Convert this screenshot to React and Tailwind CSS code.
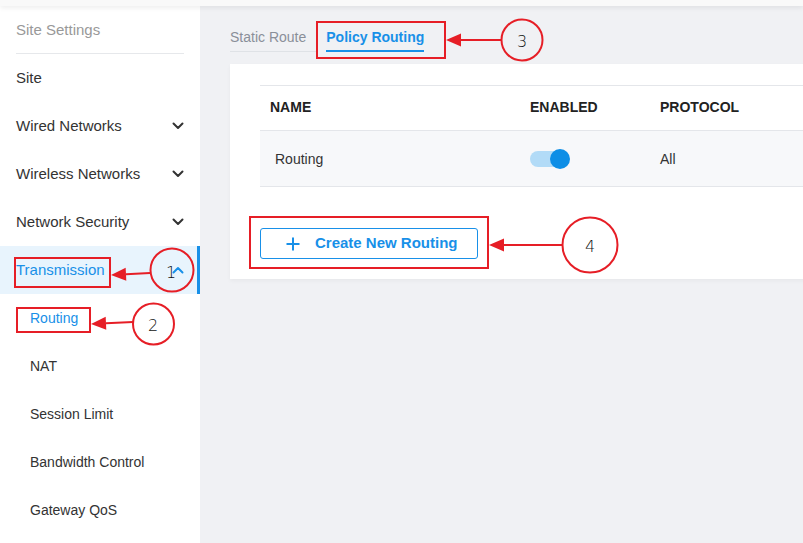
import React from "react";

const Chevron = ({ up = false, color = "#333" }) => (
  <svg width="12" height="8" viewBox="0 0 12 8" className="shrink-0">
    <path
      d={up ? "M1.5 6.5 L6 2 L10.5 6.5" : "M1.5 1.5 L6 6 L10.5 1.5"}
      fill="none"
      stroke={color}
      strokeWidth="2"
      strokeLinecap="round"
      strokeLinejoin="round"
    />
  </svg>
);

const Arrow = ({ x1, y1, x2, y2 }) => {
  const dx = x2 - x1;
  const dy = y2 - y1;
  const len = Math.hypot(dx, dy);
  const ux = dx / len;
  const uy = dy / len;
  const L = 15;
  const W = 6.5;
  const bx = x2 - ux * L;
  const by = y2 - uy * L;
  const px = -uy;
  const py = ux;
  return (
    <g>
      <line x1={x1} y1={y1} x2={bx} y2={by} stroke="#e61e26" strokeWidth="2" />
      <polygon
        points={`${x2},${y2} ${bx + px * W},${by + py * W} ${bx - px * W},${by - py * W}`}
        fill="#e61e26"
      />
    </g>
  );
};

const Annotations = () => (
  <svg
    className="absolute left-0 top-0 pointer-events-none"
    width="803"
    height="543"
    viewBox="0 0 803 543"
    style={{ fontFamily: "'DejaVu Sans', 'Liberation Sans', sans-serif" }}
  >
    <g fill="none" stroke="#e61e26" strokeWidth="2">
      <rect x="15" y="258" width="95" height="29" />
      <rect x="17" y="308" width="73" height="24" />
      <rect x="317" y="22" width="128" height="36" />
      <rect x="250" y="217" width="238" height="51" />
      <circle cx="172" cy="270" r="21.5" />
      <circle cx="153.5" cy="324" r="20.5" />
      <circle cx="522" cy="40" r="20.5" />
      <circle cx="590" cy="245" r="27.5" />
    </g>
    <Arrow x1={150} y1={273} x2={111} y2={275} />
    <Arrow x1={133} y1={322} x2={91} y2={324} />
    <Arrow x1={501} y1={40} x2={446} y2={40} />
    <Arrow x1={562} y1={245} x2={489} y2={245} />
    <g fill="#111" fontSize="16" fontWeight="300" textAnchor="middle">
      <text x="171" y="278">1</text>
      <text x="153" y="331">2</text>
      <text x="522" y="47">3</text>
      <text x="590" y="252">4</text>
    </g>
  </svg>
);

const NavItem = ({ label, chevron }) => (
  <div className="h-[48px] flex items-center justify-between pl-[16px] pr-[16px] text-[15px] text-[#333]">
    <span>{label}</span>
    {chevron && <Chevron />}
  </div>
);

const SubItem = ({ label, active }) => (
  <div
    className={`h-[48px] flex items-center pl-[30px] text-[14px] ${
      active ? "text-[#1890e8]" : "text-[#333]"
    }`}
  >
    {label}
  </div>
);

export default function App() {
  return (
    <div
      className="relative w-[803px] h-[543px] overflow-hidden bg-[#f0f1f4]"
      style={{ fontFamily: "'Liberation Sans', Arial, sans-serif" }}
    >
      <div className="relative z-10 h-[6px] bg-[#f9f9f9] shadow-[0_2px_5px_rgba(0,0,0,0.07)]" />
      <div className="flex h-[537px]">
        <aside className="w-[200px] shrink-0 bg-white flex flex-col">
          <div className="mx-[16px] pt-[14px] pb-[13px] border-b border-[#e6e8eb] text-[15px] leading-[20px] text-[#999]">
            Site Settings
          </div>
          <NavItem label="Site" />
          <NavItem label="Wired Networks" chevron />
          <NavItem label="Wireless Networks" chevron />
          <NavItem label="Network Security" chevron />
          <div className="h-[48px] flex items-center justify-between pl-[16px] pr-[16px] text-[15px] text-[#1890e8] bg-[#e8f4fd] border-r-[3px] border-[#1890e8]">
            <span>Transmission</span>
            <span className="mr-[-3px]">
              <Chevron up color="#1890e8" />
            </span>
          </div>
          <SubItem label="Routing" active />
          <SubItem label="NAT" />
          <SubItem label="Session Limit" />
          <SubItem label="Bandwidth Control" />
          <SubItem label="Gateway QoS" />
        </aside>
        <main className="flex-1 min-w-0 pl-[30px] pt-[20px]">
          <div className="flex items-end text-[14px] h-[26px]">
            <div className="h-full pr-[10px] border-b border-[#dfe2e6] text-[#8a8f99] leading-[22px]">
              Static Route
            </div>
            <div className="h-full ml-[10px] border-b-2 border-[#1890e8] text-[#1890e8] font-bold leading-[22px]">
              Policy Routing
            </div>
          </div>
          <div className="mt-[12px] bg-white w-[600px] pl-[30px] pt-[21px] pb-[20px] shadow-[0_2px_4px_rgba(0,0,0,0.04)]">
            <div className="border-t border-[#e4e6ea]">
              <div className="grid grid-cols-[260px_130px_1fr] h-[45px] items-center border-b border-[#e4e6ea] text-[14px] font-bold text-[#222]">
                <div className="pl-[10px] pb-[1px]">NAME</div>
                <div className="pl-[10px] pb-[1px]">ENABLED</div>
                <div className="pl-[10px] pb-[1px]">PROTOCOL</div>
              </div>
              <div className="grid grid-cols-[260px_130px_1fr] h-[56px] items-center border-b border-[#e4e6ea] bg-[#f7f8fa] text-[14px] text-[#333]">
                <div className="pl-[15px] pt-[1px]">Routing</div>
                <div className="pl-[10px]">
                  <div className="relative w-[40px] h-[20px] flex items-center">
                    <div className="w-[35px] h-[16px] rounded-full bg-[#b2dbf7]" />
                    <div className="absolute left-[20px] top-0 w-[20px] h-[20px] rounded-full bg-[#0d8ee6]" />
                  </div>
                </div>
                <div className="pl-[10px] pt-[1px]">All</div>
              </div>
            </div>
            <div className="mt-[41px]">
              <button className="w-[218px] h-[31px] flex items-center border border-[#1890e8] rounded-[3px] text-[#1890e8] text-[15px] font-bold bg-white">
                <svg width="14" height="14" viewBox="0 0 14 14" className="ml-[25px]">
                  <path d="M7 0.5 V13.5 M0.5 7 H13.5" stroke="#1890e8" strokeWidth="2" />
                </svg>
                <span className="ml-[15px]">Create New Routing</span>
              </button>
            </div>
          </div>
        </main>
      </div>
      <Annotations />
    </div>
  );
}
